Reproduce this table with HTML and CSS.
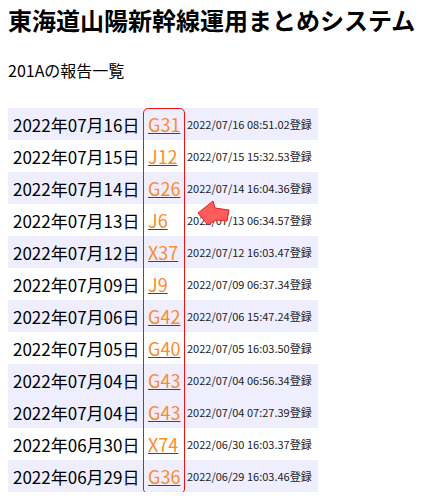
FILE: index.html
```html
<!DOCTYPE html>
<html lang="ja">
<head>
<meta charset="utf-8">
<title>東海道山陽新幹線運用まとめシステム</title>
<link rel="stylesheet" href="styles.css">
</head>
<body>
<h1 class="title">東海道山陽新幹線運用まとめシステム</h1>
<p class="sub">201Aの報告一覧</p>
<div class="wrap">
<table class="reports">
<tbody>
<tr class="odd"><td class="date">2022年07月16日</td><td class="op"><a href="#"><span>G31</span></a></td><td class="ts">2022/07/16 08:51.02登録</td></tr>
<tr><td class="date">2022年07月15日</td><td class="op"><a href="#"><span>J12</span></a></td><td class="ts">2022/07/15 15:32.53登録</td></tr>
<tr class="odd"><td class="date">2022年07月14日</td><td class="op"><a href="#"><span>G26</span></a></td><td class="ts">2022/07/14 16:04.36登録</td></tr>
<tr><td class="date">2022年07月13日</td><td class="op"><a href="#"><span>J6</span></a></td><td class="ts">2022/07/13 06:34.57登録</td></tr>
<tr class="odd"><td class="date">2022年07月12日</td><td class="op"><a href="#"><span>X37</span></a></td><td class="ts">2022/07/12 16:03.47登録</td></tr>
<tr><td class="date">2022年07月09日</td><td class="op"><a href="#"><span>J9</span></a></td><td class="ts">2022/07/09 06:37.34登録</td></tr>
<tr class="odd"><td class="date">2022年07月06日</td><td class="op"><a href="#"><span>G42</span></a></td><td class="ts">2022/07/06 15:47.24登録</td></tr>
<tr><td class="date">2022年07月05日</td><td class="op"><a href="#"><span>G40</span></a></td><td class="ts">2022/07/05 16:03.50登録</td></tr>
<tr class="odd"><td class="date">2022年07月04日</td><td class="op"><a href="#"><span>G43</span></a></td><td class="ts">2022/07/04 06:56.34登録</td></tr>
<tr class="odd"><td class="date">2022年07月04日</td><td class="op"><a href="#"><span>G43</span></a></td><td class="ts">2022/07/04 07:27.39登録</td></tr>
<tr><td class="date">2022年06月30日</td><td class="op"><a href="#"><span>X74</span></a></td><td class="ts">2022/06/30 16:03.37登録</td></tr>
<tr class="odd"><td class="date">2022年06月29日</td><td class="op"><a href="#"><span>G36</span></a></td><td class="ts">2022/06/29 16:03.46登録</td></tr>
</tbody>
</table>
<div class="highlight"></div>
<svg class="arrow" width="40" height="30" viewBox="194 198 40 30" aria-hidden="true">
<polygon points="198,214 213,202 215,209 229,211 227,222 216,221 208,226" fill="#ff5c5c" stroke="#e61e1e" stroke-width="1" stroke-linejoin="round"/>
</svg>
</div>
</body>
</html>
```
FILE: styles.css
```css
body {
  margin: 8px;
  font-family: "Noto Sans CJK JP", "Noto Sans", sans-serif;
  color: #000;
  background: #fff;
}
.title {
  margin: 0;
  font-size: 24px;
  line-height: 24px;
  font-weight: bold;
}
.sub {
  margin: 30px 0 0;
  font-size: 16px;
  line-height: 16px;
}
.wrap {
  position: relative;
  margin-top: 30px;
  width: 310px;
}
.reports {
  border-collapse: collapse;
  width: 310px;
}
.reports td {
  padding: 0;
  height: 32px;
  white-space: nowrap;
  vertical-align: middle;
}
.reports tr.odd td {
  background: #eeeeff;
}
.date {
  width: 135px;
  padding-left: 5px !important;
  font-size: 17px;
  box-sizing: border-box;
}
.op {
  width: 42px;
  padding-left: 5px !important;
  font-size: 18px;
  box-sizing: border-box;
}
.op a {
  color: #1a3fd0;
  text-decoration: underline;
  text-decoration-color: #1a3fd0;
}
.op a span {
  color: #ff8a2a;
}
.ts {
  font-size: 11px;
  color: #222;
  padding-left: 2px !important;
}
.highlight {
  position: absolute;
  left: 135px;
  top: 0;
  width: 42px;
  height: 386px;
  box-sizing: border-box;
  border: 1.5px solid #ee1111;
  border-radius: 5px;
}
.arrow {
  position: absolute;
  left: 186px;
  top: 89px;
}
```
